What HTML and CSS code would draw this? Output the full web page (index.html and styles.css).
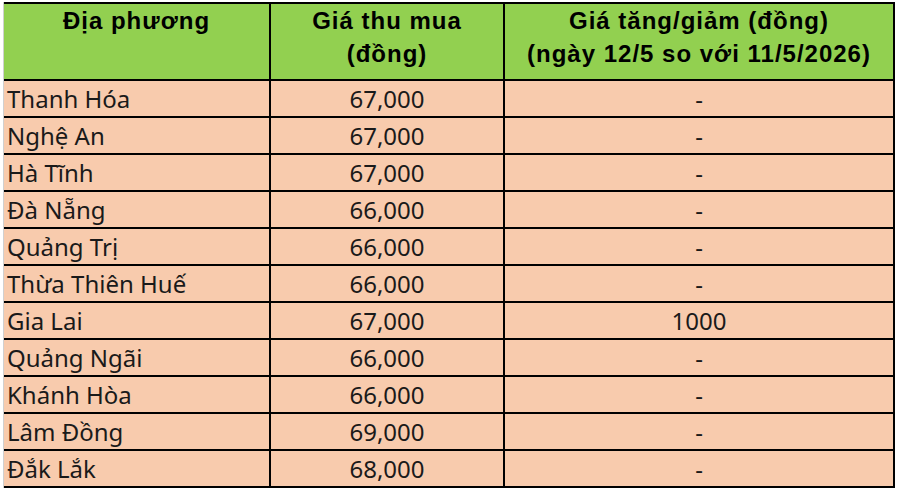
FILE: index.html
```html
<!DOCTYPE html>
<html lang="vi">
<head>
<meta charset="utf-8">
<title>Giá thu mua</title>
<link rel="stylesheet" href="styles.css">
</head>
<body>
<div class="sheet">
  <div class="grid">
    <div class="hd hd-left">Địa phương</div>
    <div class="hd">Giá thu mua<br>(đồng)</div>
    <div class="hd">Giá tăng/giảm (đồng)<br>(ngày 12/5 so với 11/5/2026)</div>

    <div class="c name">Thanh Hóa</div><div class="c num">67,000</div><div class="c num">-</div>
    <div class="c name">Nghệ An</div><div class="c num">67,000</div><div class="c num">-</div>
    <div class="c name">Hà Tĩnh</div><div class="c num">67,000</div><div class="c num">-</div>
    <div class="c name">Đà Nẵng</div><div class="c num">66,000</div><div class="c num">-</div>
    <div class="c name">Quảng Trị</div><div class="c num">66,000</div><div class="c num">-</div>
    <div class="c name">Thừa Thiên Huế</div><div class="c num">66,000</div><div class="c num">-</div>
    <div class="c name">Gia Lai</div><div class="c num">67,000</div><div class="c num">1000</div>
    <div class="c name">Quảng Ngãi</div><div class="c num">66,000</div><div class="c num">-</div>
    <div class="c name">Khánh Hòa</div><div class="c num">66,000</div><div class="c num">-</div>
    <div class="c name">Lâm Đồng</div><div class="c num">69,000</div><div class="c num">-</div>
    <div class="c name">Đắk Lắk</div><div class="c num">68,000</div><div class="c num">-</div>
  </div>
</div>
</body>
</html>
```
FILE: styles.css
```css
* { box-sizing: border-box; }
html, body { margin: 0; padding: 0; background: #ffffff; }
.sheet {
  width: 898px;
  height: 490px;
  padding: 2px 0 0 3px;
  background: #ffffff;
}
.grid {
  display: grid;
  grid-template-columns: 265px 232px 388px;
  grid-template-rows: 75px repeat(11, 35px);
  gap: 2px;
  padding: 2px 2px 2px 0;
  width: 892px;
  background: #000000;
  border-left: 1px solid #d0d0d0;
}
.hd {
  background: #92d050;
  font-family: "Liberation Sans", Arial, sans-serif;
  font-weight: bold;
  font-size: 24px;
  letter-spacing: 1px;
  line-height: 33px;
  color: #000000;
  text-align: center;
  padding-top: 0;
}
.c {
  background: #f8cbad;
  font-family: "Noto Sans", "Open Sans", sans-serif;
  font-size: 24px;
  color: #1a1a1a;
  display: flex;
  align-items: center;
  line-height: 1;
}
.name { padding-left: 3px; }
.num { justify-content: center; }
```
